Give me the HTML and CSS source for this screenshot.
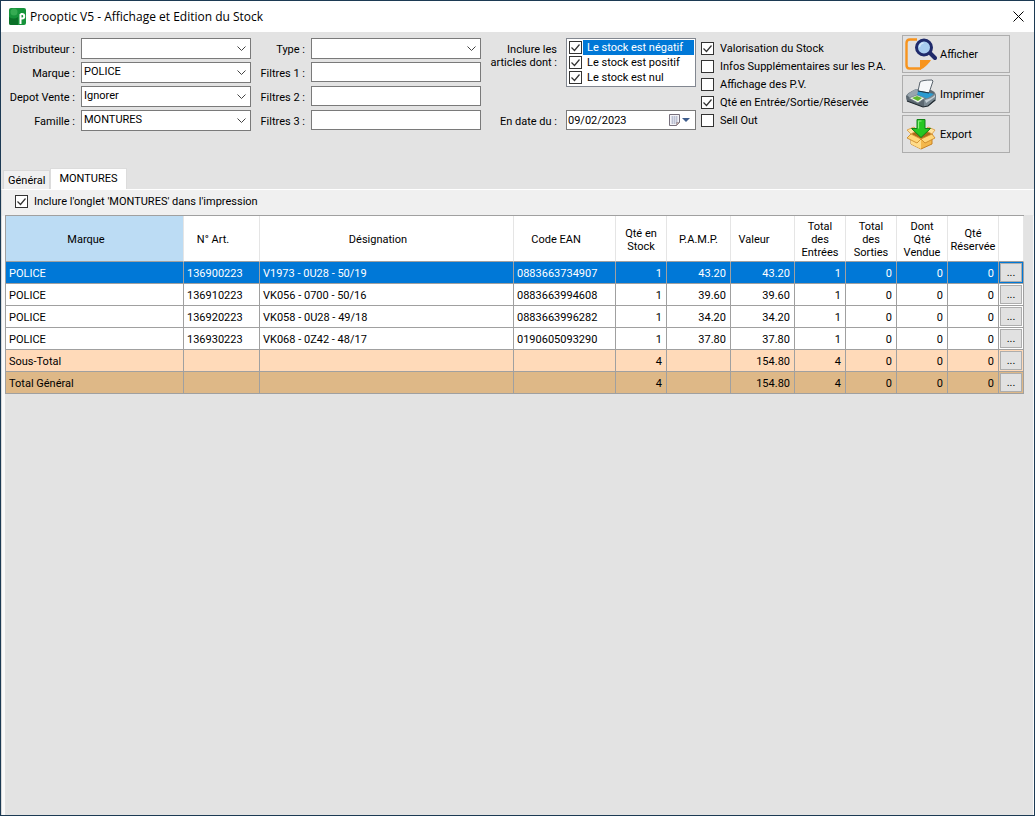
FILE: index.html
```html
<!DOCTYPE html>
<html lang="fr">
<head>
<meta charset="utf-8">
<title>Prooptic V5 - Affichage et Edition du Stock</title>
<link rel="stylesheet" href="styles.css">
</head>
<body>
<div class="window">
  <header class="titlebar">
    <svg class="logo" viewBox="0 0 17 17" width="17" height="17" aria-hidden="true">
      <rect width="17" height="17" rx="2" fill="#16933a"/>
      <circle cx="5" cy="4" r="3.500" fill="#35ab52"/>
      <path d="M0 9q5 3 9 0v8H2q-2 0-2-2z" fill="#0b7028"/>
      <path d="M11.500 16V6M11.500 6h1.500a2 2 0 0 1 0 4.500h-1.500" fill="none" stroke="#fff" stroke-width="2"/>
    </svg>
    <h1 class="title">Prooptic V5 - Affichage et Edition du Stock</h1>
    <button class="close" aria-label="Fermer"><svg viewBox="0 0 11 11" width="11" height="11"><path d="M.5.5l10 10M10.500.5l-10 10" stroke="#000" fill="none"/></svg></button>
  </header>

  <form class="criteria">
    <div class="fields fields-main">
      <label for="dist">Distributeur :</label><select id="dist" class="box"><option></option></select>
      <label for="marque">Marque :</label><select id="marque" class="box"><option>POLICE</option></select>
      <label for="depot">Depot Vente :</label><select id="depot" class="box"><option>Ignorer</option></select>
      <label for="famille">Famille :</label><select id="famille" class="box"><option>MONTURES</option></select>
    </div>
    <div class="fields fields-filter">
      <label for="type">Type :</label><select id="type" class="box"><option></option></select>
      <label for="f1">Filtres 1 :</label><input id="f1" type="text" class="box">
      <label for="f2">Filtres 2 :</label><input id="f2" type="text" class="box">
      <label for="f3">Filtres 3 :</label><input id="f3" type="text" class="box">
    </div>
    <div class="scope">
      <span class="scope-label" id="scope-label">Inclure les<br>articles dont :</span>
      <div class="checklist" role="group" aria-labelledby="scope-label">
        <label class="item selected"><input type="checkbox" class="check" checked><span>Le stock est négatif</span></label>
        <label class="item"><input type="checkbox" class="check" checked><span>Le stock est positif</span></label>
        <label class="item"><input type="checkbox" class="check" checked><span>Le stock est nul</span></label>
      </div>
      <label for="date">En date du :</label>
      <div class="date">
        <input id="date" type="text" class="date-text" value="09/02/2023">
        <button type="button" class="date-open" aria-label="Calendrier">
          <svg viewBox="0 0 22 12" width="22" height="12">
            <path d="M.5.5h10v8l-3 3h-7z" fill="#f4f4f8" stroke="#77707c"/>
            <path d="M2 3h7M2 5h7M2 7h7M2 9h5M3.500 2v8M5.500 2v8M7.500 2v7" stroke="#b4bace" stroke-width=".8" fill="none"/>
            <path d="M7.500 11.500v-3h3z" fill="#c5a8a0" stroke="#77707c" stroke-width=".5"/>
            <path d="M13 4h8l-4 4z" fill="#3d5c8c"/>
          </svg>
        </button>
      </div>
    </div>
    <div class="options">
      <label class="option"><input type="checkbox" class="check" checked>Valorisation du Stock</label>
      <label class="option"><input type="checkbox" class="check">Infos Supplémentaires sur les P.A.</label>
      <label class="option"><input type="checkbox" class="check">Affichage des P.V.</label>
      <label class="option"><input type="checkbox" class="check" checked>Qté en Entrée/Sortie/Réservée</label>
      <label class="option"><input type="checkbox" class="check">Sell Out</label>
    </div>
    <div class="actions">
      <button type="button" class="action">
        <svg viewBox="0 0 32 32" width="32" height="32" aria-hidden="true">
          <path d="M12 1.500H5Q1.500 1.500 1.500 5v22q0 3.500 3 3.500H16" fill="none" stroke="#f7941e" stroke-width="2.400"/>
          <path d="M15 32V22h11q-1 2-4 5-4 4-7 5z" fill="#f7941e"/>
          <path d="M24 14l6 6" stroke="#1f2a6b" stroke-width="4" stroke-linecap="round"/>
          <circle cx="19" cy="9.500" r="7.500" fill="#a9cdf0" stroke="#1f2a6b" stroke-width="3"/>
          <path d="M14.500 9a4.500 4.500 0 0 1 4-4" fill="none" stroke="#d5e8fa" stroke-width="1.500"/>
        </svg>
        Afficher
      </button>
      <button type="button" class="action">
        <svg viewBox="0 0 32 32" width="32" height="32" aria-hidden="true">
          <path d="M1 18q1-3 10-7l15 1q5 2 5 6v4l-8 6-5 1-16-6q-1-2-1-5z" fill="#5c6871"/>
          <path d="M2 17q3-3 9-6l5 1-5 6-6 2z" fill="#98a5ae"/>
          <path d="M13 13l2-9q2-2 12-2l1 1-4 12z" fill="#f6f8fa" stroke="#59636c"/>
          <path d="M13 13q6 2 12 2l4 1-6 5-11-3z" fill="#2b9bd0"/>
          <path d="M13 13l11 2" stroke="#17384a" stroke-width="1.200"/>
          <path d="M19 21q6-1 11-6l1 7-8 6h-4z" fill="#7b8992"/>
          <path d="M20 22q6-1 10-5v2l-9 6z" fill="#c3cdd3"/>
          <path d="M4 20l8-3 8 3-7 5z" fill="#eef4ea" stroke="#68747c" stroke-width=".7"/>
          <path d="M7 20l5-2 5 2-4 3z" fill="#5fb82e"/>
          <path d="M2 23l16 6 5-1 7-6" fill="none" stroke="#20292f" stroke-width="1.200"/>
        </svg>
        Imprimer
      </button>
      <button type="button" class="action">
        <svg viewBox="0 0 32 32" width="32" height="32" aria-hidden="true">
          <path d="M6 16l11-4 10 4v10l-11 5-10-5z" fill="#f3b74b" stroke="#c88222"/>
          <path d="M6 16l11-4 10 4-11 5z" fill="#a9691b"/>
          <path d="M6 16l10 5v10L6 26z" fill="#ffdc8a"/>
          <path d="M6 16l-4 4 10 5 4-4zM27 16l3 4-10 5-4-4z" fill="#ffd679" stroke="#c88222" stroke-width=".8"/>
          <path d="M6 16l-4-4 7-3 3 3zM27 16l3-4-7-3-3 3z" fill="#ffe3a1" stroke="#d9973b" stroke-width=".8"/>
          <path d="M12 1.500h8v9h5.500L16 19.500 6.500 10.500H12z" fill="#25c722" stroke="#118016"/>
          <path d="M13.500 10.500v-7.500h3" fill="none" stroke="#8cf07e" stroke-width="1.200"/>
        </svg>
        Export
      </button>
    </div>
  </form>

  <nav class="tabs" role="tablist">
    <button class="tab" role="tab" aria-selected="false">Général</button>
    <button class="tab active" role="tab" aria-selected="true">MONTURES</button>
  </nav>

  <main class="page">
    <div class="print-row">
      <label class="option"><input type="checkbox" class="check" checked>Inclure l'onglet 'MONTURES' dans l'impression</label>
    </div>
    <div class="canvas">
      <table class="stock">
        <colgroup>
          <col class="w-brand"><col class="w-art"><col><col class="w-ean"><col class="w-qty"><col class="w-money"><col class="w-money"><col class="w-qty"><col class="w-qty"><col class="w-qty"><col class="w-qty"><col class="w-more">
        </colgroup>
        <thead>
          <tr>
            <th class="sortable current">Marque</th><th class="sortable">N° Art.</th><th class="sortable">Désignation</th><th class="sortable">Code EAN</th>
            <th>Qté en<br>Stock</th><th>P.A.M.P.</th><th class="sortable">Valeur</th><th>Total<br>des<br>Entrées</th><th>Total<br>des<br>Sorties</th><th>Dont<br>Qté<br>Vendue</th><th>Qté<br>Réservée</th><th></th>
          </tr>
        </thead>
        <tbody>
          <tr class="active-row"><td>POLICE</td><td>136900223</td><td>V1973 - 0U28 - 50/19</td><td>0883663734907</td><td class="num">1</td><td class="num">43.20</td><td class="num">43.20</td><td class="num">1</td><td class="num">0</td><td class="num">0</td><td class="num">0</td><td class="more"><button>...</button></td></tr>
          <tr><td>POLICE</td><td>136910223</td><td>VK056 - 0700 - 50/16</td><td>0883663994608</td><td class="num">1</td><td class="num">39.60</td><td class="num">39.60</td><td class="num">1</td><td class="num">0</td><td class="num">0</td><td class="num">0</td><td class="more"><button>...</button></td></tr>
          <tr><td>POLICE</td><td>136920223</td><td>VK058 - 0U28 - 49/18</td><td>0883663996282</td><td class="num">1</td><td class="num">34.20</td><td class="num">34.20</td><td class="num">1</td><td class="num">0</td><td class="num">0</td><td class="num">0</td><td class="more"><button>...</button></td></tr>
          <tr><td>POLICE</td><td>136930223</td><td>VK068 - 0Z42 - 48/17</td><td>0190605093290</td><td class="num">1</td><td class="num">37.80</td><td class="num">37.80</td><td class="num">1</td><td class="num">0</td><td class="num">0</td><td class="num">0</td><td class="more"><button>...</button></td></tr>
          <tr class="subtotal"><td>Sous-Total</td><td></td><td></td><td></td><td class="num">4</td><td></td><td class="num">154.80</td><td class="num">4</td><td class="num">0</td><td class="num">0</td><td class="num">0</td><td class="more"><button>...</button></td></tr>
          <tr class="total"><td>Total Général</td><td></td><td></td><td></td><td class="num">4</td><td></td><td class="num">154.80</td><td class="num">4</td><td class="num">0</td><td class="num">0</td><td class="num">0</td><td class="more"><button>...</button></td></tr>
        </tbody>
      </table>
    </div>
  </main>
</div>
</body>
</html>
```
FILE: styles.css
```css
* { box-sizing: border-box; }

body {
  margin: 0;
  background: #fff;
  color: #000;
  font: 11px/13px Roboto, "Liberation Sans", sans-serif;
}

button, input, select { font: inherit; color: inherit; margin: 0; }

.window {
  display: flex;
  flex-direction: column;
  min-height: 100vh;
  border: 1px solid #1c3a54;
  background: #e3e3e3;
}

.titlebar {
  display: flex;
  align-items: center;
  gap: 4px;
  height: 31px;
  padding: 0 10px 0 8px;
  background: #fff;
}
.title { flex: 1; margin: 0; font: 12px/16px "Open Sans", "Noto Sans", sans-serif; }
.close { display: flex; padding: 0; border: 0; background: none; }

.criteria {
  display: flex;
  align-items: flex-start;
  min-height: 136px;
  padding: 3px 24px 0 4px;
}

.fields {
  display: grid;
  grid-auto-rows: 21px;
  row-gap: 3px;
  column-gap: 6px;
  align-items: start;
  padding-top: 3px;
}
.fields label { text-align: right; padding-top: 5px; white-space: nowrap; }
.fields-main { flex: 1 1 246px; grid-template-columns: 70px 1fr; }
.fields-filter { flex: 1 1 230px; grid-template-columns: 54px 1fr; }

.box {
  width: 100%;
  height: 20px;
  padding: 0 2px 2px;
  border: 1px solid #7a7a7a;
  border-radius: 0;
  background: #fff;
}
select.box {
  height: 21px;
  appearance: none;
  background: #fff url("data:image/svg+xml,%3Csvg xmlns='http://www.w3.org/2000/svg' width='9' height='6'%3E%3Cpath d='M.5.500l4 4 4-4' fill='none' stroke='%23444'/%3E%3C/svg%3E") no-repeat right 4px center;
}

.scope {
  display: grid;
  grid-template-columns: 76px 130px;
  grid-template-rows: 72px 20px;
  column-gap: 9px;
  align-items: start;
  padding-top: 3px;
}
.scope > label, .scope-label { text-align: right; padding-top: 5px; white-space: nowrap; }

.checklist { height: 49px; padding: 1px; border: 1px solid #828790; background: #fff; }
.item { display: flex; gap: 1px; height: 15px; align-items: center; padding-left: 1px; }
.item span { flex: 1; padding: 0 4px; line-height: 15px; }
.item.selected span { background: #0078d7; color: #fff; }

.check {
  appearance: none;
  flex: none;
  width: 13px;
  height: 13px;
  border: 1px solid #333;
  background: #fff;
}
.check:checked {
  background: #fff url("data:image/svg+xml,%3Csvg xmlns='http://www.w3.org/2000/svg' width='11' height='11'%3E%3Cpath d='M1.500 5.500l3 3 5-6' fill='none' stroke='%23333' stroke-width='1.200'/%3E%3C/svg%3E") no-repeat center;
}

.date { display: flex; align-items: center; height: 20px; border: 1px solid #7a7a7a; background: #fff; }
.date-text { flex: 1; min-width: 0; padding: 0 1px; border: 0; background: none; }
.date-open { display: flex; padding: 0 4px 0 0; border: 0; background: none; }

.options { width: 206px; padding: 4px 0 0 5px; }
.option { display: flex; align-items: center; gap: 6px; height: 18px; white-space: nowrap; }

.actions { display: flex; flex-direction: column; gap: 2px; width: 108px; }
.action {
  display: flex;
  align-items: center;
  gap: 3px;
  height: 38px;
  padding: 0 2px;
  border: 1px solid #adadad;
  background: #e1e1e1;
}

.tabs { display: flex; align-items: flex-end; padding-left: 2px; }
.tab {
  height: 19px;
  padding: 0 4px;
  border: 1px solid #d9d9d9;
  border-bottom: 0;
  background: #f0f0f0;
}
.tab.active { height: 21px; padding: 0 8px 2px; border-color: #dcdcdc; background: #fff; }

.page {
  display: flex;
  flex: 1;
  flex-direction: column;
  padding: 0 1px 0 3px;
  border-left: 1px solid #d9d9d9;
  border-top: 1px solid #fff;
  background: linear-gradient(#f0f0f0, #f0f0f0) no-repeat top / 100% 26px, #fafafa;
}
.print-row { display: flex; align-items: center; height: 25px; padding: 0 0 2px 10px; background: #f0f0f0; }
.canvas { flex: 1; padding-right: 9px; background: #e3e3e3; }

.stock {
  width: 100%;
  table-layout: fixed;
  border-collapse: separate;
  border-spacing: 0;
  border-top: 1px solid #a0a0a0;
  border-left: 1px solid #a0a0a0;
}
.w-brand { width: 178px; }
.w-art { width: 76px; }
.w-ean { width: 102px; }
.w-qty { width: 51px; }
.w-money { width: 64px; }
.w-more { width: 25px; }

th {
  height: 46px;
  padding: 2px 0 0;
  border-right: 1px solid #e5e5e5;
  border-bottom: 1px solid #a0a0a0;
  background: #fff;
  font-weight: normal;
}
th.sortable { padding-right: 17px; }
th.current { background: #bcdcf4; }

td {
  height: 22px;
  padding: 1px 3px 0;
  border-right: 1px solid #a0a0a0;
  border-bottom: 1px solid #a0a0a0;
  background: #fff;
  white-space: nowrap;
}
td.num { padding-right: 4px; text-align: right; }
td.more { padding: 1px; }
td.more button {
  display: block;
  width: 100%;
  height: 19px;
  padding: 0;
  border: 1px solid #adadad;
  background: #e1e1e1;
  color: #000;
}
.active-row td { background: #0078d7; color: #fff; }
.subtotal td { background: #ffdab9; }
.total td { background: #deb887; }
```
